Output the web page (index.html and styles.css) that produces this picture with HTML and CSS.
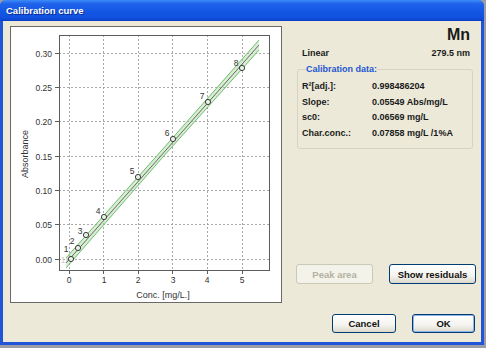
FILE: index.html
```html
<!DOCTYPE html>
<html lang="en">
<head>
    <meta charset="UTF-8">
    <title>Calibration curve</title>
    <link rel="stylesheet" href="styles.css">
</head>
<body>
    <div class="window">
        <div class="titlebar">Calibration curve</div>
        <div class="client">
            <div class="chart-panel">
                <svg class="plot" width="270" height="275" viewBox="0 0 270 275">
                    <g class="grid">
                        <line x1="58.5" y1="8" x2="58.5" y2="243"/>
                        <line x1="92.5" y1="8" x2="92.5" y2="243"/>
                        <line x1="127.5" y1="8" x2="127.5" y2="243"/>
                        <line x1="161.5" y1="8" x2="161.5" y2="243"/>
                        <line x1="196.5" y1="8" x2="196.5" y2="243"/>
                        <line x1="231.5" y1="8" x2="231.5" y2="243"/>
                        <line x1="48" y1="26.5" x2="258" y2="26.5"/>
                        <line x1="48" y1="60.5" x2="258" y2="60.5"/>
                        <line x1="48" y1="94.5" x2="258" y2="94.5"/>
                        <line x1="48" y1="129.5" x2="258" y2="129.5"/>
                        <line x1="48" y1="163.5" x2="258" y2="163.5"/>
                        <line x1="48" y1="197.5" x2="258" y2="197.5"/>
                        <line x1="48" y1="232.5" x2="258" y2="232.5"/>
                    </g>
                    <rect class="frame" x="48.5" y="8.5" width="210" height="235"/>
                    <g class="ticks">
                        <line x1="44" y1="26.5" x2="48" y2="26.5"/>
                        <line x1="44" y1="60.5" x2="48" y2="60.5"/>
                        <line x1="44" y1="94.5" x2="48" y2="94.5"/>
                        <line x1="44" y1="129.5" x2="48" y2="129.5"/>
                        <line x1="44" y1="163.5" x2="48" y2="163.5"/>
                        <line x1="44" y1="197.5" x2="48" y2="197.5"/>
                        <line x1="44" y1="232.5" x2="48" y2="232.5"/>
                        <line x1="58.5" y1="244" x2="58.5" y2="247"/>
                        <line x1="92.5" y1="244" x2="92.5" y2="247"/>
                        <line x1="127.5" y1="244" x2="127.5" y2="247"/>
                        <line x1="161.5" y1="244" x2="161.5" y2="247"/>
                        <line x1="196.5" y1="244" x2="196.5" y2="247"/>
                        <line x1="231.5" y1="244" x2="231.5" y2="247"/>
                    </g>
                    <g class="axis-text y-labels">
                        <text x="41" y="29.5">0.30</text>
                        <text x="41" y="63.5">0.25</text>
                        <text x="41" y="97.5">0.20</text>
                        <text x="41" y="132.5">0.15</text>
                        <text x="41" y="166.5">0.10</text>
                        <text x="41" y="200.5">0.05</text>
                        <text x="41" y="235.5">0.00</text>
                    </g>
                    <g class="axis-text x-labels">
                        <text x="58" y="256">0</text>
                        <text x="93" y="256">1</text>
                        <text x="127" y="256">2</text>
                        <text x="162" y="256">3</text>
                        <text x="196" y="256">4</text>
                        <text x="231" y="256">5</text>
                    </g>
                    <text class="axis-title" x="152" y="271" text-anchor="middle">Conc. [mg/L.]</text>
                    <text class="axis-title" transform="translate(16.5 127) rotate(-90)" text-anchor="middle">Absorbance</text>

                    <polygon class="band" points="55,231 151,123 248,13 248,23 151,131 55,241"/>
                    <polyline class="band-edge" points="55,231 151,123 248,13"/>
                    <polyline class="band-edge" points="55,241 151,131 248,23"/>
                    <line class="fit" x1="55" y1="236" x2="248" y2="18"/>

                    <g class="points">
                        <circle cx="60" cy="232" r="2.6"/>
                        <circle cx="67" cy="221" r="2.6"/>
                        <circle cx="75" cy="208" r="2.6"/>
                        <circle cx="93" cy="190" r="2.6"/>
                        <circle cx="127" cy="150" r="2.6"/>
                        <circle cx="162" cy="112" r="2.6"/>
                        <circle cx="197" cy="75" r="2.6"/>
                        <circle cx="231" cy="41" r="2.6"/>
                    </g>
                    <g class="point-labels">
                        <text class="faint" x="52" y="236">1</text>
                        <text x="55" y="225">1</text>
                        <text x="61" y="217">2</text>
                        <text x="69" y="207">3</text>
                        <text x="87" y="187">4</text>
                        <text x="121" y="147">5</text>
                        <text x="156" y="109">6</text>
                        <text x="191" y="72">7</text>
                        <text x="225" y="39">8</text>
                    </g>
                </svg>
            </div>

            <div class="side">
                <div class="element">Mn</div>
                <div class="method-row">
                    <span>Linear</span>
                    <span>279.5 nm</span>
                </div>
                <fieldset class="cal-data">
                    <legend>Calibration data:</legend>
                    <div class="data-grid">
                        <span>R²[adj.]:</span><span>0.998486204</span>
                        <span>Slope:</span><span>0.05549 Abs/mg/L</span>
                        <span>sc0:</span><span>0.06569 mg/L</span>
                        <span>Char.conc.:</span><span>0.07858 mg/L /1%A</span>
                    </div>
                </fieldset>
                <div class="button-row first">
                    <button class="button peak" disabled>Peak area</button>
                    <button class="button residuals">Show residuals</button>
                </div>
                <div class="button-row last">
                    <button class="button cancel">Cancel</button>
                    <button class="button ok">OK</button>
                </div>
            </div>
        </div>
    </div>
</body>
</html>
```

FILE: styles.css
```css
body {
    margin: 0;
    background-color: #9c9ca8;
    font-family: "Liberation Sans", Arial, sans-serif;
}
.window {
    width: 484px;
    height: 345px;
    box-sizing: border-box;
    background: #ece9d8;
    border: 3px solid #1f55d6;
    border-top: none;
    border-radius: 6px 6px 0 0;
    display: flex;
    flex-direction: column;
}
.titlebar {
    height: 21px;
    margin: 0 -3px;
    padding-left: 6px;
    line-height: 21px;
    color: #fff;
    font-weight: bold;
    font-size: 9.5px;
    border-radius: 6px 6px 0 0;
    background: linear-gradient(#3c8cf8 0%, #2062ea 18%, #1457e4 55%, #1050df 85%, #0a3fc4 100%);
    text-shadow: 1px 1px 0 #0a2c90;
}
.client {
    flex: 1;
    display: flex;
    padding: 5px 0 0 7px;
}
.chart-panel {
    width: 270px;
    height: 275px;
    background: #fff;
    border: 1px solid #6a6a6a;
}
.plot {
    display: block;
}
.grid line {
    stroke: #a8a8a8;
    stroke-width: 1;
    stroke-dasharray: 2 2;
}
.frame {
    fill: none;
    stroke: #5c5c5c;
    stroke-width: 1;
}
.ticks line {
    stroke: #5c5c5c;
    stroke-width: 1;
}
.axis-text text {
    font-size: 8.5px;
    fill: #333;
}
.y-labels text {
    text-anchor: end;
}
.x-labels text {
    text-anchor: middle;
}
.axis-title {
    font-size: 9px;
    fill: #333;
}
.band {
    fill: #a8d8a0;
    fill-opacity: 0.45;
}
.band-edge {
    fill: none;
    stroke: #6cbf6a;
    stroke-width: 1;
}
.fit {
    stroke: #6a6a6a;
    stroke-width: 1;
}
.points circle {
    fill: #e8f2e6;
    stroke: #3c3c3c;
    stroke-width: 1;
}
.point-labels text {
    font-size: 8.5px;
    fill: #333;
    text-anchor: middle;
}
.point-labels .faint {
    fill: #cfcfcf;
}
.side {
    width: 180px;
    margin-left: 14px;
    display: flex;
    flex-direction: column;
    font-size: 9px;
    font-weight: bold;
    color: #1a1a1a;
}
.element {
    text-align: right;
    padding-right: 6px;
    font-size: 16px;
    line-height: 18px;
}
.method-row {
    display: flex;
    justify-content: space-between;
    padding: 0 6px;
    margin-top: 3px;
    line-height: 13px;
}
.cal-data {
    margin: 3px 3px 0 1px;
    padding: 3px 4px 7px 4px;
    border: 1px solid #d6d3c4;
    border-radius: 3px;
}
.cal-data legend {
    padding: 0;
    margin-left: 4px;
    color: #1c56d2;
    line-height: 13px;
}
.data-grid {
    display: grid;
    grid-template-columns: 70px 1fr;
    line-height: 15.5px;
}
.button-row {
    display: flex;
    gap: 16px;
}
.button-row.first {
    margin-top: 115px;
}
.button-row.last {
    margin-top: 30px;
    justify-content: flex-end;
    padding-right: 1px;
}
.button {
    height: 20px;
    padding: 0;
    font-family: "Liberation Sans", Arial, sans-serif;
    font-size: 9.5px;
    font-weight: bold;
    color: #111;
    border: 1px solid #003c74;
    border-radius: 3px;
    background: linear-gradient(#ffffff, #f4f3ee 60%, #dcd8cc);
}
.button:disabled {
    color: #b4b1a2;
    border-color: #cbc8b8;
    background: #f4f3ea;
}
.peak {
    width: 77px;
}
.residuals {
    width: 87px;
}
.cancel {
    width: 64px;
    height: 19px;
}
.ok {
    width: 63px;
    height: 19px;
    box-shadow: inset 0 0 0 1px #8fb3ec;
}
```
